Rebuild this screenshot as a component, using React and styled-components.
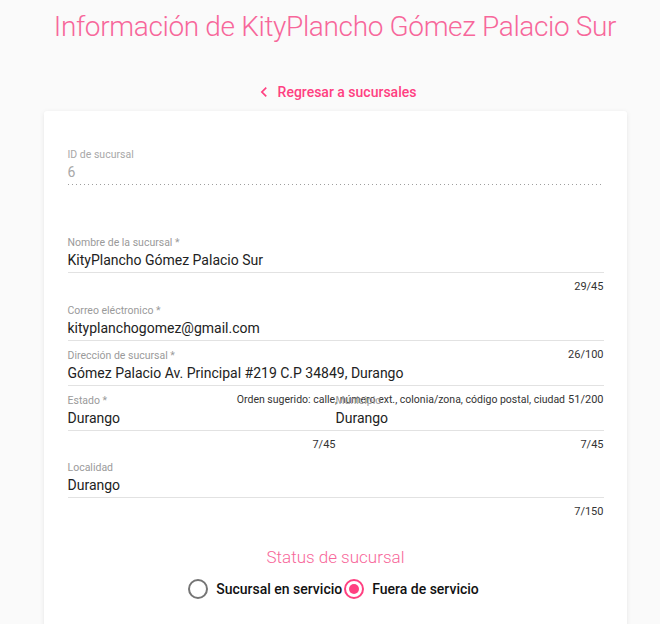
import React from 'react'
import styled, { createGlobalStyle } from 'styled-components'

const GlobalStyle = createGlobalStyle`
  body {
    margin: 0;
    background: #fafafa;
    font-family: Roboto, "Liberation Sans", sans-serif;
  }
`

const Page = styled.div`
  padding: 0 0 0 10px;
  height: 624px;
  overflow: hidden;
`

const Title = styled.h1`
  margin: 0;
  padding-top: 9px;
  text-align: center;
  font-family: Roboto, sans-serif;
  font-weight: 300;
  font-size: 28px;
  letter-spacing: -0.35px;
  line-height: 36px;
  color: #f7679a;
`

const BackLink = styled.a`
  display: flex;
  align-items: center;
  justify-content: center;
  gap: 4px;
  margin-top: 37px;
  height: 20px;
  color: #ff4081;
  font-size: 14px;
  font-weight: 500;
  text-decoration: none;
  cursor: pointer;
  svg {
    width: 20px;
    height: 20px;
    fill: currentColor;
  }
`

const Card = styled.div`
  width: 583px;
  margin: 9px auto 0;
  background: #fff;
  border-radius: 3px;
  box-shadow: 0 2px 2px -1px rgba(0, 0, 0, 0.12), 0 1px 5px 0 rgba(0, 0, 0, 0.08);
  padding: 37px 23px 40px 24px;
  box-sizing: border-box;
`

const Field = styled.div`
  margin-bottom: ${({ after }) => after}px;
`

const Label = styled.div`
  font-size: 10.5px;
  line-height: 14px;
  height: 14px;
  color: ${({ disabled }) => (disabled ? '#a8a8a8' : '#9a9a9a')};
  white-space: nowrap;
`

const Value = styled.div`
  font-size: 14px;
  line-height: 20px;
  padding-bottom: 2px;
  color: ${({ disabled }) => (disabled ? '#a8a8a8' : '#222')};
  border-bottom: ${({ disabled }) => (disabled ? 'none' : '1px solid #e2e2e2')};
  white-space: nowrap;
`

const DottedLine = styled.div`
  height: 1px;
  background-image: linear-gradient(to right, rgba(0, 0, 0, 0.38) 0, rgba(0, 0, 0, 0.38) 1px, transparent 1px);
  background-size: 4px 1px;
  background-repeat: repeat-x;
`

const Details = styled.div`
  display: flex;
  justify-content: flex-end;
  align-items: baseline;
  gap: 3px;
  margin-top: 7px;
  height: 14px;
  font-size: 11px;
  line-height: 14px;
  color: #333;
  white-space: nowrap;
`

const Hint = styled.span`
  font-size: 10.5px;
`

const Row = styled.div`
  display: grid;
  grid-template-columns: 1fr 1fr;
  margin-bottom: ${({ after }) => after}px;
`

const StatusTitle = styled.div`
  margin-top: 28px;
  text-align: center;
  font-size: 17px;
  font-weight: 300;
  line-height: 20px;
  color: #f7679a;
`

const RadioGroup = styled.div`
  display: flex;
  justify-content: center;
  margin-top: 10px;
  padding-right: 6px;
`

const Radio = styled.label`
  display: flex;
  align-items: center;
  gap: 6px;
  height: 24px;
  font-size: 14px;
  font-weight: 500;
  color: #111;
  cursor: pointer;
  svg {
    width: 24px;
    height: 24px;
    fill: ${({ checked }) => (checked ? '#ff4081' : '#757575')};
  }
`

const ChevronLeft = () => (
  <svg viewBox="0 0 24 24">
    <path d="M15.41,16.58L10.83,12L15.41,7.41L14,6L8,12L14,18L15.41,16.58Z" />
  </svg>
)

const RadioIcon = ({ checked }) => (
  <svg viewBox="0 0 24 24">
    <path d="M12,20A8,8 0 0,1 4,12A8,8 0 0,1 12,4A8,8 0 0,1 20,12A8,8 0 0,1 12,20M12,2A10,10 0 0,0 2,12A10,10 0 0,0 12,22A10,10 0 0,0 22,12A10,10 0 0,0 12,2Z" />
    {checked && <path d="M12,7A5,5 0 0,0 7,12A5,5 0 0,0 12,17A5,5 0 0,0 17,12A5,5 0 0,0 12,7Z" />}
  </svg>
)

const TextField = ({ label, value, counter, hint, after }) => (
  <Field after={after}>
    <Label>{label}</Label>
    <Value>{value}</Value>
    <Details>
      {hint && <Hint>{hint}</Hint>}
      {counter && <span>{counter}</span>}
    </Details>
  </Field>
)

export default function App() {
  return (
    <Page>
      <GlobalStyle />
      <Title>Información de KityPlancho Gómez Palacio Sur</Title>
      <BackLink>
        <ChevronLeft />
        Regresar a sucursales
      </BackLink>
      <Card>
        <Field after={51}>
          <Label disabled>ID de sucursal</Label>
          <Value disabled>6</Value>
          <DottedLine />
        </Field>
        <TextField label="Nombre de la sucursal *" value="KityPlancho Gómez Palacio Sur" counter="29/45" after={10} />
        <TextField label="Correo eléctronico *" value="kityplanchogomez@gmail.com" counter="26/100" after={-13} />
        <TextField
          label="Dirección de sucursal *"
          value="Gómez Palacio Av. Principal #219 C.P 34849, Durango"
          hint="Orden sugerido: calle, número ext., colonia/zona, código postal, ciudad"
          counter="51/200"
          after={-13}
        />
        <Row after={9}>
          <TextField label="Estado *" value="Durango" counter="7/45" after={0} />
          <TextField label="Municipio" value="Durango" counter="7/45" after={0} />
        </Row>
        <TextField label="Localidad" value="Durango" counter="7/150" after={0} />
        <StatusTitle>Status de sucursal</StatusTitle>
        <RadioGroup>
          <Radio>
            <RadioIcon />
            Sucursal en servicio
          </Radio>
          <Radio checked>
            <RadioIcon checked />
            Fuera de servicio
          </Radio>
        </RadioGroup>
      </Card>
    </Page>
  )
}
